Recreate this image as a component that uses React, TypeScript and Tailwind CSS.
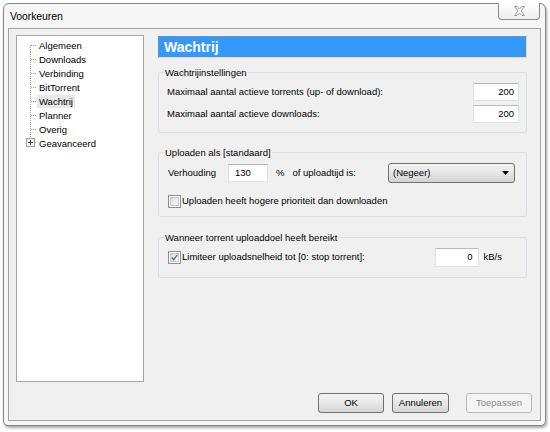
import React from "react";

function TreeRow({
  label,
  first,
  last,
  plus,
  selected,
}: {
  label: string;
  first?: boolean;
  last?: boolean;
  plus?: boolean;
  selected?: boolean;
}) {
  return (
    <div className="flex h-[14px] items-center">
      <svg width="20" height="14" className="shrink-0" shapeRendering="crispEdges">
        {!plus && (
          <line
            x1="13.5"
            y1={first ? 7 : 0}
            x2="13.5"
            y2={last ? 7 : 14}
            stroke="#a0a0a0"
            strokeDasharray="1 1"
          />
        )}
        {plus ? (
          <>
            <line x1="13.5" y1="0" x2="13.5" y2="2" stroke="#a0a0a0" strokeDasharray="1 1" />
            <rect x="9.5" y="2.5" width="8" height="8" fill="#f4f4f4" stroke="#a0a0a0" />
            <line x1="11" y1="6.5" x2="16" y2="6.5" stroke="#404040" />
            <line x1="13.5" y1="4" x2="13.5" y2="9" stroke="#404040" />
            <line x1="18" y1="6.5" x2="20" y2="6.5" stroke="#a0a0a0" strokeDasharray="1 1" />
          </>
        ) : (
          <line x1="14" y1="7.5" x2="20" y2="7.5" stroke="#a0a0a0" strokeDasharray="1 1" />
        )}
      </svg>
      <span
        className={
          selected
            ? "px-[2px] h-[13px] leading-[13px] bg-[#e8e8e8]"
            : "px-[2px] h-[13px] leading-[13px]"
        }
      >
        {label}
      </span>
    </div>
  );
}

function TextBox({
  value,
  className,
}: {
  value: string;
  className: string;
}) {
  return (
    <div
      className={
        "flex items-center bg-white border border-[#dfe3e8] border-t-[#b8bcc2] " + className
      }
    >
      {value}
    </div>
  );
}

function CheckBox({ checked }: { checked?: boolean }) {
  return (
    <div className="w-[13px] h-[13px] shrink-0 border border-[#8e8f8f] bg-white p-[1px]">
      <div className="w-full h-full border border-[#c8c8c8] bg-linear-to-br from-[#dcdcdc] to-[#fbfbfb] flex items-center justify-center">
        {checked && (
          <svg width="9" height="9" viewBox="0 0 9 9">
            <path
              d="M1 4.5 L3.5 7.5 L8 1"
              fill="none"
              stroke="#4a5f8f"
              strokeWidth="1.6"
            />
          </svg>
        )}
      </div>
    </div>
  );
}

function Button({
  label,
  width,
  disabled,
}: {
  label: string;
  width: string;
  disabled?: boolean;
}) {
  return (
    <div
      className={
        disabled
          ? "h-[20px] rounded-[3px] border border-[#b5b9bc] bg-[#f4f4f4] text-[#8a8a8a] flex items-center justify-center " +
            width
          : "h-[20px] rounded-[3px] border border-[#707070] bg-linear-to-b from-[#f4f4f4] via-[#e8e8e8] to-[#d4d4d4] text-black flex items-center justify-center " +
            width
      }
    >
      {label}
    </div>
  );
}

export default function App() {
  return (
    <div className="w-[550px] h-[432px] bg-white pt-[3px] pl-[3px] font-['Liberation_Sans',Arial,sans-serif] text-[9.5px] text-black">
      <div className="w-[543px] h-[423px] border border-[#858585] rounded-t-[6px] rounded-b-[5px] bg-[#f6f6f6] shadow-[1px_2px_3px_rgba(0,0,0,0.35)] flex flex-col">
        {/* title bar */}
        <div className="h-[24px] flex items-start pl-[6px] pr-[5px]">
          <div className="self-center text-[10.5px] tracking-[-0.1px] pt-[1px]">Voorkeuren</div>
          <div className="ml-auto -mt-[1px] w-[42px] h-[17px] border border-[#8c8c8c] border-t-0 rounded-b-[4px] bg-linear-to-b from-[#ffffff] to-[#eeeeee] flex items-center justify-center">
            <svg width="11" height="10" viewBox="0 0 11 10">
              <path
                d="M0.5 0.5 H3 L5.5 3 L8 0.5 H10.5 L7 5 L10.5 9.5 H8 L5.5 7 L3 9.5 H0.5 L4 5 Z"
                fill="#fdfdfd"
                stroke="#9a9a9a"
                strokeWidth="1"
                strokeLinejoin="round"
              />
            </svg>
          </div>
        </div>

        {/* inner client area */}
        <div className="mx-[4px] h-[393px] border border-[#a3a3a3] bg-[#f0f0f0] flex flex-col">
          <div className="flex items-start pl-[7px] pt-[6px]">
            {/* tree */}
            <div className="w-[128px] h-[347px] border border-[#a2a7ad] bg-white pt-[2px]">
              <TreeRow label="Algemeen" first />
              <TreeRow label="Downloads" />
              <TreeRow label="Verbinding" />
              <TreeRow label="BitTorrent" />
              <TreeRow label="Wachtrij" selected />
              <TreeRow label="Planner" />
              <TreeRow label="Overig" />
              <TreeRow label="Geavanceerd" plus last />
            </div>

            {/* right panel */}
            <div className="ml-[14px] mt-[1px] w-[369px] flex flex-col">
              <div className="h-[22px] bg-[#3399ff] border-t border-l border-[#8a8a8a] border-b-[#d8d8d8] border-r-[#d8d8d8] border-b border-r flex items-center pl-[5px] text-white font-bold text-[14px]">
                Wachtrij
              </div>

              {/* group 1 */}
              <fieldset className="mt-[8px] border border-[#d5dfe5] rounded-[3px] pl-[8px] pr-[7px] pt-[4px] pb-[9px]">
                <legend className="ml-[-3px] px-[1px] leading-[13px]">Wachtrijinstellingen</legend>
                <div className="flex flex-col gap-[4px]">
                  <div className="flex items-center justify-between">
                    <span>Maximaal aantal actieve torrents (up- of download):</span>
                    <TextBox value="200" className="w-[46px] h-[18px] justify-end pr-[4px]" />
                  </div>
                  <div className="flex items-center justify-between">
                    <span>Maximaal aantal actieve downloads:</span>
                    <TextBox value="200" className="w-[46px] h-[18px] justify-end pr-[4px]" />
                  </div>
                </div>
              </fieldset>

              {/* group 2 */}
              <fieldset className="mt-[13px] border border-[#d5dfe5] rounded-[3px] pl-[9px] pr-[11px] pt-[4px] pb-[8px]">
                <legend className="ml-[-4px] px-[1px] leading-[13px]">Uploaden als [standaard]</legend>
                <div className="flex items-center h-[20px]">
                  <span className="w-[60px]">Verhouding</span>
                  <TextBox value="130" className="w-[40px] h-[18px] pl-[6px]" />
                  <span className="ml-[8px]">%</span>
                  <span className="ml-[8px]">of uploadtijd is:</span>
                  <div className="ml-auto w-[127px] h-[20px] rounded-[3px] border border-[#707070] bg-linear-to-b from-[#f3f3f3] via-[#e6e6e6] to-[#d2d2d2] flex items-center pl-[4px] pr-[5px]">
                    <span>(Negeer)</span>
                    <svg className="ml-auto" width="7" height="4" viewBox="0 0 7 4">
                      <path d="M0 0 H7 L3.5 4 Z" fill="#000" />
                    </svg>
                  </div>
                </div>
                <div className="mt-[12px] flex items-center h-[13px]">
                  <CheckBox />
                  <span className="ml-[1px]">Uploaden heeft hogere prioriteit dan downloaden</span>
                </div>
              </fieldset>

              {/* group 3 */}
              <fieldset className="mt-[14px] border border-[#d5dfe5] rounded-[3px] pl-[9px] pr-[24px] pt-[4px] pb-[10px]">
                <legend className="ml-[-4px] px-[1px] leading-[13px]">Wanneer torrent uploaddoel heeft bereikt</legend>
                <div className="flex items-center h-[19px]">
                  <CheckBox checked />
                  <span className="ml-[1px]">Limiteer uploadsnelheid tot [0: stop torrent]:</span>
                  <TextBox value="0" className="ml-auto w-[44px] h-[19px] justify-end pr-[5px]" />
                  <span className="ml-[5px]">kB/s</span>
                </div>
              </fieldset>
            </div>
          </div>

          {/* buttons */}
          <div className="mt-[11px] flex justify-end pr-[8px]">
            <Button label="OK" width="w-[66px]" />
            <Button label="Annuleren" width="w-[57px] ml-[8px]" />
            <Button label="Toepassen" width="w-[66px] ml-[17px]" disabled />
          </div>
        </div>
      </div>
    </div>
  );
}
